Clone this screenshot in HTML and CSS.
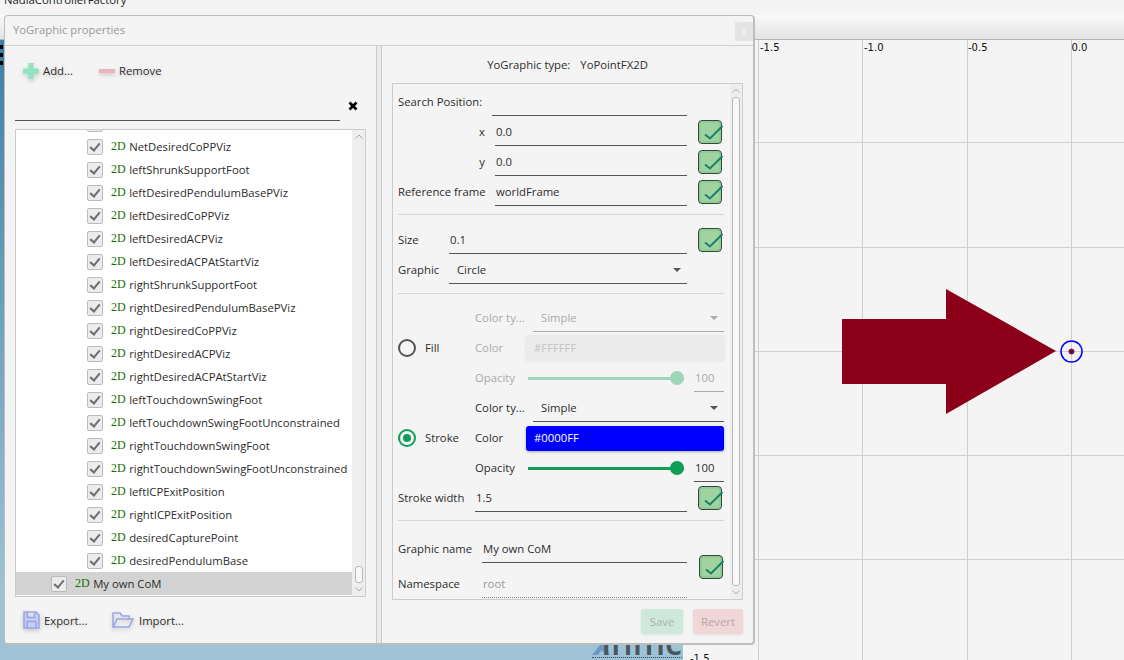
FILE: index.html
```html
<!DOCTYPE html>
<html lang="en">
<head>
    <meta charset="UTF-8">
    <title>YoGraphic properties</title>
    <link rel="stylesheet" href="styles.css">
</head>
<body>
    <div class="app">
        <div class="app-title">NadiaControllerFactory</div>
        <div class="app-toolbar"></div>
        <div class="app-body">
            <div class="view3d">
                <div class="dashes"><span></span><span></span><span></span></div>
                <div class="logo">
                    <svg class="logo-mark" width="20" height="16" viewBox="0 0 20 16"><path d="M0 16 L8 6 L12 6 L18 16 L13 16 L10 11 L6 16 Z" fill="#6f97c6"/></svg>
                    <span class="logo-text">ihmc</span>
                </div>
            </div>
            <svg class="plot" viewBox="683 40 441 620">
                <g stroke="#cfcfcf" stroke-width="1">
                    <path d="M758.5 40V660M862.5 40V660M967.5 40V660M1071.5 40V660"/>
                    <path d="M683 142.5H1124M683 247.5H1124M683 351.5H1124M683 455.5H1124M683 559.5H1124"/>
                </g>
                <g class="plot-label">
                    <text x="760" y="51">-1.5</text>
                    <text x="864" y="51">-1.0</text>
                    <text x="968" y="51">-0.5</text>
                    <text x="1071.500" y="51">0.0</text>
                    <text x="690" y="662">-1.5</text>
                </g>
                <polygon points="842,319 946,319 946,289 1056,351 946,414 946,384 842,384" fill="#8b0018"/>
                <circle cx="1071.5" cy="351.5" r="10.5" fill="none" stroke="#0000ff" stroke-width="1.5"/>
                <circle cx="1071.5" cy="351.5" r="2.6" fill="#8b0018" stroke="#5a1a9a" stroke-width="0.8"/>
            </svg>
        </div>
    </div>

    <div class="dialog">
        <div class="dialog-title">
            <span>YoGraphic properties</span>
            <div class="close-btn">x</div>
        </div>
        <div class="dialog-body">
            <div class="left-pane">
                <div class="tool-row">
                    <div class="tool-btn add-btn">
                        <svg class="icon" width="16" height="16" viewBox="0 0 16 16"><path d="M5.5 0H10.500V5.500H16V10.500H10.500V16H5.500V10.500H0V5.500H5.500Z" fill="#8fe3c0"/></svg>
                        <span>Add...</span>
                    </div>
                    <div class="tool-btn remove-btn">
                        <svg class="icon" width="16" height="16" viewBox="0 0 16 16"><rect x="0" y="6" width="16" height="4" fill="#eeb2bd"/></svg>
                        <span>Remove</span>
                    </div>
                </div>
                <div class="search-row">
                    <div class="search-input"></div>
                    <svg class="clear-icon" width="10" height="10" viewBox="0 0 10 10"><path d="M1.500 1.500L8.500 8.500M8.500 1.500L1.500 8.500" stroke="#000" stroke-width="2.600"/></svg>
                </div>
                <div class="list">
                    <div class="list-rows">
                        <div class="row"><i class="cb"></i><b class="dim">2D</b><span>leftFootCoPViz</span></div>
                        <div class="row"><i class="cb"></i><b class="dim">2D</b><span>NetDesiredCoPPViz</span></div>
                        <div class="row"><i class="cb"></i><b class="dim">2D</b><span>leftShrunkSupportFoot</span></div>
                        <div class="row"><i class="cb"></i><b class="dim">2D</b><span>leftDesiredPendulumBasePViz</span></div>
                        <div class="row"><i class="cb"></i><b class="dim">2D</b><span>leftDesiredCoPPViz</span></div>
                        <div class="row"><i class="cb"></i><b class="dim">2D</b><span>leftDesiredACPViz</span></div>
                        <div class="row"><i class="cb"></i><b class="dim">2D</b><span>leftDesiredACPAtStartViz</span></div>
                        <div class="row"><i class="cb"></i><b class="dim">2D</b><span>rightShrunkSupportFoot</span></div>
                        <div class="row"><i class="cb"></i><b class="dim">2D</b><span>rightDesiredPendulumBasePViz</span></div>
                        <div class="row"><i class="cb"></i><b class="dim">2D</b><span>rightDesiredCoPPViz</span></div>
                        <div class="row"><i class="cb"></i><b class="dim">2D</b><span>rightDesiredACPViz</span></div>
                        <div class="row"><i class="cb"></i><b class="dim">2D</b><span>rightDesiredACPAtStartViz</span></div>
                        <div class="row"><i class="cb"></i><b class="dim">2D</b><span>leftTouchdownSwingFoot</span></div>
                        <div class="row"><i class="cb"></i><b class="dim">2D</b><span>leftTouchdownSwingFootUnconstrained</span></div>
                        <div class="row"><i class="cb"></i><b class="dim">2D</b><span>rightTouchdownSwingFoot</span></div>
                        <div class="row"><i class="cb"></i><b class="dim">2D</b><span>rightTouchdownSwingFootUnconstrained</span></div>
                        <div class="row"><i class="cb"></i><b class="dim">2D</b><span>leftICPExitPosition</span></div>
                        <div class="row"><i class="cb"></i><b class="dim">2D</b><span>rightICPExitPosition</span></div>
                        <div class="row"><i class="cb"></i><b class="dim">2D</b><span>desiredCapturePoint</span></div>
                        <div class="row"><i class="cb"></i><b class="dim">2D</b><span>desiredPendulumBase</span></div>
                        <div class="row selected"><i class="cb"></i><b class="dim">2D</b><span>My own CoM</span></div>
                    </div>
                    <div class="vbar list-bar">
                        <svg class="chev" width="8" height="5" viewBox="0 0 8 5"><path d="M0.500 4.500L4 1L7.500 4.500" fill="none" stroke="#aaa"/></svg>
                        <div class="thumb-space"><div class="thumb"></div></div>
                        <svg class="chev" width="8" height="5" viewBox="0 0 8 5"><path d="M0.500 0.500L4 4L7.500 0.500" fill="none" stroke="#aaa"/></svg>
                    </div>
                </div>
                <div class="foot-row">
                    <div class="tool-btn export-btn">
                        <svg class="icon" width="17" height="18" viewBox="0 0 17 18"><path d="M1 1H13L16 4V17H1ZM4.500 1V6.500H11.500V1M4 17V10.500H13V17" fill="#c5cdf2" stroke="#98a5e6" stroke-width="1.500"/></svg>
                        <span>Export...</span>
                    </div>
                    <div class="tool-btn import-btn">
                        <svg class="icon" width="22" height="16" viewBox="0 0 22 16"><path d="M1 15V1H8L10 4H17V7M1 15L5 7H21L17 15Z" fill="none" stroke="#98a5e6" stroke-width="1.500"/></svg>
                        <span>Import...</span>
                    </div>
                </div>
            </div>
            <div class="divider"></div>
            <div class="right-pane">
                <div class="type-row"><span>YoGraphic type:</span><span>YoPointFX2D</span></div>
                <div class="form-box">
                    <div class="form">
                        <div class="f-row">
                            <label class="lbl w94">Search Position:</label>
                            <div class="field"></div>
                            <div class="check-gap"></div>
                        </div>
                        <div class="f-row">
                            <label class="lbl w97 right">x</label>
                            <div class="field">0.0</div>
                            <svg class="ok"><use href="#ok-icon"/></svg>
                        </div>
                        <div class="f-row">
                            <label class="lbl w97 right">y</label>
                            <div class="field">0.0</div>
                            <svg class="ok"><use href="#ok-icon"/></svg>
                        </div>
                        <div class="f-row">
                            <label class="lbl w97">Reference frame</label>
                            <div class="field">worldFrame</div>
                            <svg class="ok"><use href="#ok-icon"/></svg>
                        </div>
                        <div class="sep"></div>
                        <div class="f-row">
                            <label class="lbl w51">Size</label>
                            <div class="field">0.1</div>
                            <svg class="ok"><use href="#ok-icon"/></svg>
                        </div>
                        <div class="f-row">
                            <label class="lbl w51">Graphic</label>
                            <div class="field select">Circle<i class="caret"></i></div>
                            <div class="check-gap"></div>
                        </div>
                        <div class="sep sep-b"></div>

                        <div class="paint">
                            <div class="paint-name"><i class="radio"></i><span class="paint-text">Fill</span></div>
                            <div class="paint-rows disabled">
                                <div class="f-row">
                                    <label class="lbl w58">Color ty...</label>
                                    <div class="field select wide">Simple<i class="caret"></i></div>
                                </div>
                                <div class="f-row">
                                    <label class="lbl w51">Color</label>
                                    <div class="swatch swatch-off">#FFFFFF</div>
                                </div>
                                <div class="f-row">
                                    <label class="lbl w53">Opacity</label>
                                    <div class="slider"><div class="thumb-dot"></div></div>
                                    <div class="field value">100</div>
                                </div>
                            </div>
                        </div>
                        <div class="paint">
                            <div class="paint-name"><i class="radio on"></i><span class="paint-text">Stroke</span></div>
                            <div class="paint-rows">
                                <div class="f-row">
                                    <label class="lbl w58">Color ty...</label>
                                    <div class="field select wide">Simple<i class="caret"></i></div>
                                </div>
                                <div class="f-row">
                                    <label class="lbl w51">Color</label>
                                    <div class="swatch swatch-blue">#0000FF</div>
                                </div>
                                <div class="f-row">
                                    <label class="lbl w53">Opacity</label>
                                    <div class="slider"><div class="thumb-dot"></div></div>
                                    <div class="field value">100</div>
                                </div>
                            </div>
                        </div>

                        <div class="f-row">
                            <label class="lbl w77">Stroke width</label>
                            <div class="field">1.5</div>
                            <svg class="ok"><use href="#ok-icon"/></svg>
                        </div>
                        <div class="sep sep-c"></div>
                        <div class="name-block">
                            <div class="name-rows">
                                <div class="f-row">
                                    <label class="lbl w84">Graphic name</label>
                                    <div class="field">My own CoM</div>
                                </div>
                                <div class="f-row ns-row">
                                    <label class="lbl w84">Namespace</label>
                                    <div class="field dotted">root</div>
                                </div>
                            </div>
                            <svg class="ok ok-name"><use href="#ok-icon"/></svg>
                        </div>
                    </div>
                    <div class="vbar form-bar">
                        <svg class="chev" width="8" height="5" viewBox="0 0 8 5"><path d="M0.500 4.500L4 1L7.500 4.500" fill="none" stroke="#aaa"/></svg>
                        <div class="thumb-space"><div class="thumb tall"></div></div>
                        <svg class="chev" width="8" height="5" viewBox="0 0 8 5"><path d="M0.500 0.500L4 4L7.500 0.500" fill="none" stroke="#aaa"/></svg>
                    </div>
                </div>
                <div class="action-row">
                    <div class="action save">Save</div>
                    <div class="action revert">Revert</div>
                </div>
            </div>
        </div>
    </div>

    <svg class="defs" width="0" height="0">
        <symbol id="ok-icon" viewBox="0 0 25 24">
            <rect x="0.500" y="0.500" width="23" height="23" rx="3.500" fill="#a0d3a0" stroke="#2f4a3a"/>
            <rect x="2" y="2" width="20" height="20" rx="2" fill="none" stroke="#7fb98a" stroke-width="0.700"/>
            <path d="M7 14.500L12 18.500L24.500 6" fill="none" stroke="#17806f" stroke-width="2"/>
        </symbol>
    </svg>
</body>
</html>
```

FILE: styles.css
```css
html, body {
    margin: 0;
    padding: 0;
    height: 100%;
    overflow: hidden;
}
body {
    font-family: "Open Sans", sans-serif;
    font-size: 11.3px;
    color: #2c2c2c;
    background-color: #f4f4f4;
}
.app {
    width: 1124px;
    height: 660px;
    display: flex;
    flex-direction: column;
}
.app-title {
    height: 15px;
    line-height: 0;
    padding-left: 4px;
    color: #222;
    flex: none;
}
.app-toolbar {
    height: 25px;
    flex: none;
    box-sizing: border-box;
    border-bottom: 1px solid #b5b5b5;
    background: linear-gradient(#f9f9f9, #e3e3e3);
}
.app-body {
    flex: 1;
    display: flex;
    min-height: 0;
}
.view3d {
    width: 683px;
    position: relative;
    overflow: hidden;
    background: linear-gradient(#3f7fa5, #9fc3d6 90%);
}
.dashes {
    position: absolute;
    left: 0;
    top: 5px;
    display: flex;
    flex-direction: column;
    gap: 4px;
}
.dashes span {
    display: block;
    width: 3px;
    height: 4px;
    background-color: #000;
}
.logo {
    position: absolute;
    left: 592px;
    bottom: 2px;
    width: 94px;
    height: 24px;
    border-bottom: 1px dotted #3b4a55;
}
.logo-mark {
    position: absolute;
    left: 0;
    bottom: 2px;
}
.logo-text {
    position: absolute;
    right: 4px;
    bottom: 5px;
    font-size: 34px;
    line-height: 20px;
    font-weight: 600;
    color: #48565f;
}
.plot {
    flex: 1;
    height: 620px;
    display: block;
}
.plot-label text {
    font-family: "DejaVu Sans", sans-serif;
    font-size: 10px;
    fill: #111;
}
.defs {
    position: absolute;
}

/* dialog window */
.dialog {
    position: absolute;
    left: 4px;
    top: 15px;
    width: 751px;
    height: 630px;
    box-sizing: border-box;
    display: flex;
    flex-direction: column;
    background-color: #f4f4f4;
    border: 1px solid #bdbdbd;
    border-bottom-width: 2px;
    border-right-width: 2px;
    border-radius: 4px;
}
.dialog-title {
    height: 30px;
    flex: none;
    box-sizing: border-box;
    border-bottom: 1px solid #cfcfcf;
    display: flex;
    align-items: center;
    justify-content: space-between;
    padding-left: 8px;
    color: #999;
}
.dialog-title span {
    margin-bottom: 2px;
}
.close-btn {
    width: 18px;
    height: 19px;
    margin-top: 1px;
    background-color: #e4e4e4;
    color: #fbfbfb;
    text-align: center;
    line-height: 17px;
    font-size: 11px;
}
.dialog-body {
    flex: 1;
    display: flex;
    min-height: 0;
}
.left-pane {
    width: 371px;
    flex: none;
    box-sizing: border-box;
    padding: 0 10px;
    display: flex;
    flex-direction: column;
}
.divider {
    width: 6px;
    flex: none;
    box-sizing: border-box;
    background-color: #ebebeb;
    border-left: 1px solid #c9c9c9;
    border-right: 1px solid #c9c9c9;
}
.right-pane {
    flex: 1;
    min-width: 0;
    padding-left: 10px;
    padding-right: 10px;
    display: flex;
    flex-direction: column;
}

/* left pane */
.tool-row {
    display: flex;
    height: 49px;
    flex: none;
    padding-left: 8px;
    align-items: center;
}
.tool-btn {
    display: flex;
    align-items: center;
    gap: 4px;
    text-shadow: 0 2px 4px rgba(0,0,0,0.2);
}
.icon {
    filter: drop-shadow(0 2px 2px rgba(0,0,0,0.18));
    flex: none;
}
.tool-row .add-btn {
    width: 76px;
}
.search-row {
    height: 26px;
    flex: none;
    margin-bottom: 8px;
    display: flex;
    align-items: flex-start;
}
.search-input {
    width: 325px;
    height: 26px;
    box-sizing: border-box;
    border-bottom: 1px solid #555;
}
.clear-icon {
    margin-left: 8px;
    margin-top: 6px;
}
.list {
    height: 468px;
    flex: none;
    box-sizing: border-box;
    border: 1px solid #ccc;
    background-color: #fff;
    display: flex;
    overflow: hidden;
}
.list-rows {
    flex: 1;
    margin-top: -18px;
    min-width: 0;
}
.row {
    height: 23px;
    display: flex;
    align-items: center;
    padding-left: 71px;
    white-space: nowrap;
}
.row.selected {
    padding-left: 35px;
    background-color: #d3d3d3;
}
.cb {
    position: relative;
    width: 16px;
    height: 16px;
    box-sizing: border-box;
    flex: none;
    border: 1px solid #bbb;
    border-radius: 2px;
    background-color: #ececec;
}
.cb::after {
    content: "";
    position: absolute;
    left: 4px;
    top: 1px;
    width: 4px;
    height: 8px;
    border-right: 2px solid #6e6e6e;
    border-bottom: 2px solid #6e6e6e;
    transform: rotate(40deg);
}
.dim {
    font-family: "Liberation Serif", serif;
    font-size: 12px;
    font-weight: normal;
    color: #1a6e00;
    margin-left: 8px;
    margin-right: 3.500px;
}
.vbar {
    flex: none;
    display: flex;
    flex-direction: column;
    align-items: center;
    background-color: #eee;
    box-sizing: border-box;
}
.chev {
    flex: none;
    margin: 4px 0;
}
.thumb-space {
    flex: 1;
    width: 100%;
    display: flex;
    flex-direction: column;
    justify-content: flex-end;
    align-items: center;
}
.thumb {
    width: 8px;
    height: 17px;
    box-sizing: border-box;
    background-color: #f8f8f8;
    border: 1px solid #b8b8b8;
    border-radius: 3px;
}
.thumb.tall {
    height: 100%;
}
.list-bar {
    width: 13px;
}
.foot-row {
    display: flex;
    align-items: center;
    padding-left: 8px;
    padding-top: 14px;
}
.export-btn {
    width: 89px;
    gap: 4px;
}
.import-btn {
    gap: 5px;
}

/* right pane */
.type-row {
    height: 37px;
    flex: none;
    display: flex;
    justify-content: center;
    align-items: center;
    gap: 10px;
}
.form-box {
    height: 517px;
    flex: none;
    box-sizing: border-box;
    border: 1px solid #ccc;
    display: flex;
    overflow: hidden;
}
.form {
    width: 326px;
    margin-left: 5px;
    padding-top: 3px;
    flex: none;
}
.form-bar {
    width: 12px;
    margin-left: 6px;
}
.f-row {
    height: 30px;
    display: flex;
    align-items: center;
}
.lbl {
    flex: none;
    white-space: nowrap;
    margin-bottom: 2px;
}
.w94 { width: 94px; }
.w97 { width: 97px; }
.w51 { width: 51px; }
.w58 { width: 58px; }
.w53 { width: 53px; }
.w77 { width: 77px; }
.w84 { width: 84px; }
.right {
    text-align: right;
    padding-right: 10px;
    box-sizing: border-box;
}
.field {
    flex: 1;
    min-width: 0;
    align-self: flex-start;
    position: relative;
    height: 29px;
    line-height: 30px;
    box-sizing: border-box;
    border-bottom: 1px solid #555;
    padding-left: 1px;
}
.field.select {
    padding-left: 8px;
}
.field.dotted {
    border-bottom: 1px dotted #888;
    color: #999;
}
.field.value {
    flex: none;
    width: 30px;
    margin-left: 10px;
}
.check-gap {
    width: 37px;
    flex: none;
}
.ok {
    width: 25px;
    height: 24px;
    margin-left: 11px;
    margin-right: 1px;
    flex: none;
}
.caret {
    position: absolute;
    right: 6px;
    top: 13px;
    width: 0;
    height: 0;
    border-left: 4px solid transparent;
    border-right: 4px solid transparent;
    border-top: 4px solid #555;
}
.sep {
    height: 1px;
    background-color: #d6d6d6;
    margin-top: 7px;
    margin-bottom: 10px;
}
.sep-b {
    margin-top: 8px;
    margin-bottom: 9px;
}
.sep-c {
    margin-top: 7px;
    margin-bottom: 13px;
}
.paint {
    display: flex;
    align-items: center;
}
.paint-name {
    width: 77px;
    flex: none;
    display: flex;
    align-items: center;
    gap: 9px;
}
.paint-text {
    margin-bottom: 2px;
}
.paint-rows {
    flex: 1;
    min-width: 0;
}
.disabled .lbl,
.disabled .field {
    color: #aaa;
}
.disabled .field {
    border-bottom-color: #aaa;
}
.disabled .caret {
    border-top-color: #aaa;
}
.disabled .slider {
    background-color: #9fd5b8;
}
.disabled .thumb-dot {
    background-color: #9fd5b8;
}
.radio {
    position: relative;
    width: 18px;
    height: 18px;
    box-sizing: border-box;
    border: 2px solid #555;
    border-radius: 50%;
    flex: none;
}
.radio.on {
    border-color: #0f9d58;
}
.radio.on::after {
    content: "";
    position: absolute;
    left: 3px;
    top: 3px;
    width: 8px;
    height: 8px;
    border-radius: 50%;
    background-color: #0f9d58;
}
.swatch {
    flex: 1;
    height: 25px;
    line-height: 24px;
    box-sizing: border-box;
    padding-left: 8px;
    border-radius: 3px;
}
.swatch-off {
    background-color: #ececec;
    color: #c4c4c4;
    box-shadow: 0 0 3px rgba(0,0,0,0.1);
}
.swatch-blue {
    background-color: #0000ff;
    color: #fff;
    box-shadow: 0 1px 3px rgba(0,0,0,0.3);
}
.slider {
    position: relative;
    width: 156px;
    height: 3px;
    flex: none;
    background-color: #0f9d58;
}
.thumb-dot {
    position: absolute;
    right: 0;
    top: -6px;
    width: 14px;
    height: 14px;
    border-radius: 50%;
    background-color: #0f9d58;
}
.name-block {
    display: flex;
    align-items: center;
}
.name-rows {
    flex: 1;
    min-width: 0;
}
.ns-row {
    margin-top: 5px;
}
.ok-name {
    margin-left: 12px;
    margin-right: 0;
}
.action-row {
    flex: 1;
    display: flex;
    justify-content: flex-end;
    align-items: flex-start;
    gap: 10px;
    padding-top: 9px;
}
.action {
    height: 25px;
    line-height: 25px;
    text-align: center;
    border-radius: 3px;
    box-shadow: 0 1px 3px rgba(0,0,0,0.08);
}
.save {
    width: 42px;
    background-color: #cfe8dc;
    color: #a8b4ae;
}
.revert {
    width: 50px;
    background-color: #f0d6d6;
    color: #b8a8a8;
}
```
